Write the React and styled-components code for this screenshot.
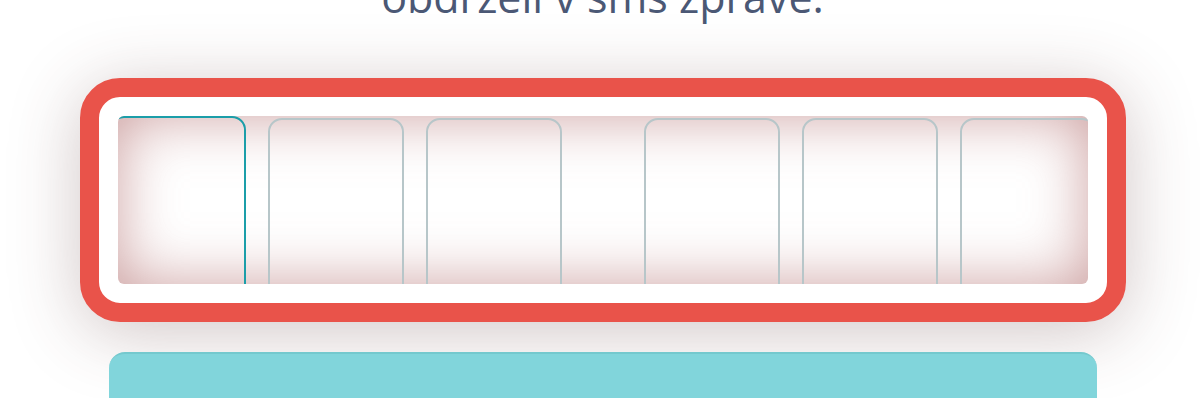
import React from 'react';
import styled, { createGlobalStyle } from 'styled-components';

const GlobalStyle = createGlobalStyle`
  html, body {
    margin: 0;
    padding: 0;
    background: #ffffff;
    overflow: hidden;
  }
  body {
    font-family: "Open Sans", "Liberation Sans", sans-serif;
  }
`;

const Page = styled.div`
  width: 1200px;
  height: 398px;
  display: flex;
  flex-direction: column;
  align-items: center;
  padding-left: 5px;
  box-sizing: border-box;
  overflow: hidden;
`;

const Title = styled.p`
  margin: -27px 0 0;
  font-size: 43px;
  line-height: 48px;
  font-weight: 400;
  color: #4b5875;
  text-align: center;
  white-space: nowrap;
`;

const CodeBox = styled.div`
  margin-top: 57px;
  width: 1046px;
  box-sizing: border-box;
  border: 19px solid #e9534a;
  border-radius: 40px;
  padding: 19px;
  background: #ffffff;
  box-shadow: 0 10px 70px rgba(90, 50, 50, 0.28);
  flex-shrink: 0;
`;

const Digits = styled.div`
  height: 168px;
  border-radius: 6px;
  overflow: hidden;
  display: flex;
  justify-content: center;
  align-items: flex-start;
  gap: 22px;
  padding-top: 1px;
  box-sizing: border-box;
  box-shadow: inset 0 0 60px rgba(170, 95, 95, 0.6);
`;

const Cell = styled.div`
  flex-shrink: 0;
  width: 136px;
  height: 200px;
  box-sizing: border-box;
  border-radius: 14px;
  border: 2px solid ${p => (p.$active ? '#1b9ea9' : '#b7c6c9')};
  margin-top: ${p => (p.$active ? '-1px' : '1px')};
  background: transparent;
`;

const Separator = styled.div`
  flex-shrink: 0;
  width: 38px;
`;

const SubmitButton = styled.div`
  margin-top: 30px;
  width: 988px;
  height: 80px;
  flex-shrink: 0;
  border-radius: 16px;
  background: #81d5db;
  border-top: 2px solid #74c9ce;
  box-sizing: border-box;
`;

export default function App() {
  const cells = [0, 1, 2, 3, 4, 5];
  return (
    <>
      <GlobalStyle />
      <Page>
        <Title>obdrželi v sms zprávě.</Title>
        <CodeBox>
          <Digits>
            {cells.map(i => (
              <React.Fragment key={i}>
                {i === 3 && <Separator />}
                <Cell $active={i === 0} />
              </React.Fragment>
            ))}
          </Digits>
        </CodeBox>
        <SubmitButton />
      </Page>
    </>
  );
}
